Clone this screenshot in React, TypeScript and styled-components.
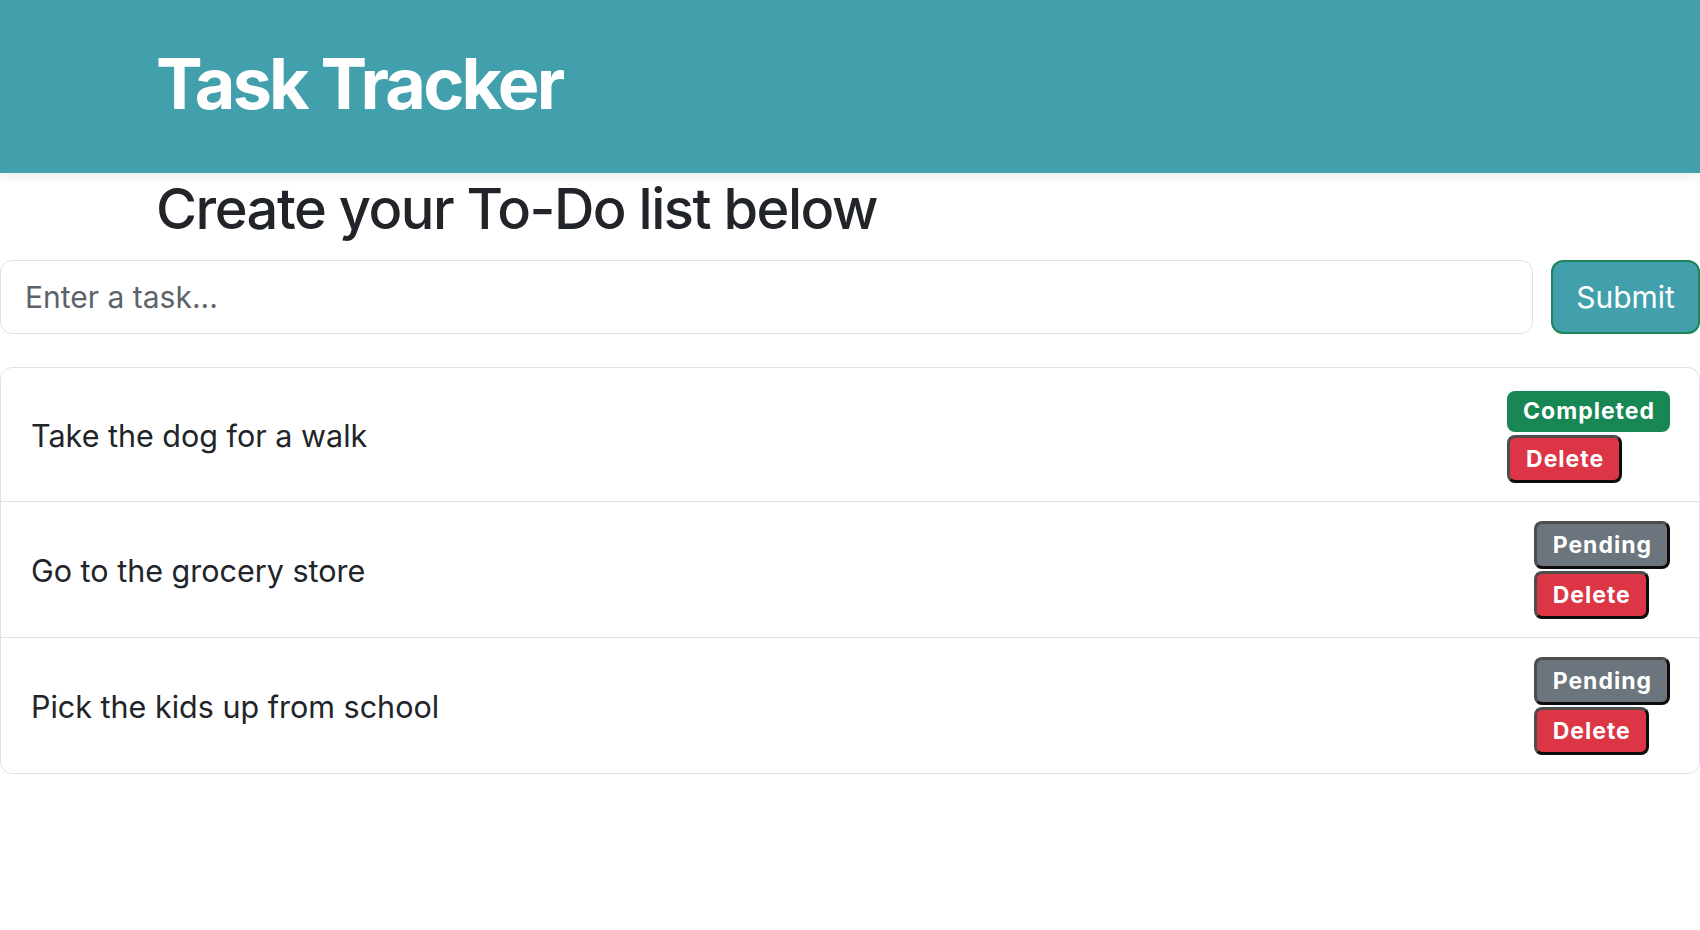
import React from "react";
import styled, { createGlobalStyle, css } from "styled-components";

const GlobalStyle = createGlobalStyle`
  html, body {
    margin: 0;
    padding: 0;
    background: #ffffff;
    font-family: Inter, "Noto Sans", "Liberation Sans", sans-serif;
    overflow-x: hidden;
  }
  * { box-sizing: border-box; }
`;

const TEAL = "#429fac";

const Header = styled.header`
  height: 173px;
  padding: 42px 0 0 156px;
  background: ${TEAL};
  box-shadow: 0 4px 10px rgba(0, 0, 0, 0.07);
  position: relative;
  z-index: 1;
`;

const Title = styled.h1`
  margin: 0;
  font-size: 70px;
  font-weight: 700;
  line-height: 1.2;
  letter-spacing: -2.8px;
  color: #ffffff;
`;

const Main = styled.main`
  display: flex;
  flex-direction: column;
`;

const Subtitle = styled.h2`
  margin: 3px 0 17px 156px;
  font-size: 56px;
  font-weight: 500;
  line-height: 1.2;
  letter-spacing: -1.5px;
  color: #212529;
`;

const Form = styled.form`
  display: flex;
  gap: 18px;
  height: 74px;
`;

const TaskInput = styled.input`
  flex: 1;
  min-width: 0;
  height: 100%;
  padding: 0 24px;
  border: 1px solid #dee2e6;
  border-radius: 12px;
  font-family: inherit;
  font-size: 30px;
  color: #212529;
  outline: none;
  &::placeholder {
    color: #5c636a;
  }
`;

const SubmitButton = styled.button`
  flex: 0 0 149px;
  height: 100%;
  padding: 0;
  background: ${TEAL};
  border: 2px solid #1d8558;
  border-radius: 12px;
  color: #ffffff;
  font-family: inherit;
  font-size: 30px;
  font-weight: 400;
`;

const List = styled.ul`
  margin: 33px 0 0;
  padding: 0;
  list-style: none;
  border: 1px solid #dee2e6;
  border-radius: 12px;
`;

const Row = styled.li`
  display: flex;
  align-items: center;
  justify-content: space-between;
  padding: 19px 29px 18px 30px;
  & + & {
    border-top: 1px solid #dee2e6;
  }
`;

const TaskText = styled.span`
  font-size: 30.5px;
  color: #212529;
`;

const Actions = styled.div`
  display: flex;
  flex-direction: column;
  align-items: flex-start;
  gap: 2px;
`;

const pillText = css`
  font-family: inherit;
  font-size: 23px;
  font-weight: 700;
  letter-spacing: 1px;
  color: #ffffff;
  line-height: 1;
  border-radius: 8px;
`;

const CompletedBadge = styled.span`
  ${pillText};
  display: inline-flex;
  align-items: center;
  height: 41px;
  margin: 4px 0 1px;
  padding: 0 15px 0 16px;
  background: #198754;
`;

const ActionButton = styled.button<{ $tone: "pending" | "delete" }>`
  ${pillText};
  height: 48px;
  padding: 0 15px 0 16px;
  border-style: solid;
  border-width: 3px;
  border-color: #4d4d4d #0d0d0d #0d0d0d #4d4d4d;
  background: ${(p) => (p.$tone === "pending" ? "#6c757d" : "#dc3545")};
`;

type Task = { text: string; done: boolean };

const tasks: Task[] = [
  { text: "Take the dog for a walk", done: true },
  { text: "Go to the grocery store", done: false },
  { text: "Pick the kids up from school", done: false },
];

export default function App() {
  return (
    <>
      <GlobalStyle />
      <Header>
        <Title>Task Tracker</Title>
      </Header>
      <Main>
        <Subtitle>Create your To-Do list below</Subtitle>
        <Form onSubmit={(e) => e.preventDefault()}>
          <TaskInput placeholder="Enter a task..." />
          <SubmitButton type="submit">Submit</SubmitButton>
        </Form>
        <List>
          {tasks.map((t) => (
            <Row key={t.text}>
              <TaskText>{t.text}</TaskText>
              <Actions>
                {t.done ? (
                  <CompletedBadge>Completed</CompletedBadge>
                ) : (
                  <ActionButton $tone="pending">Pending</ActionButton>
                )}
                <ActionButton $tone="delete">Delete</ActionButton>
              </Actions>
            </Row>
          ))}
        </List>
      </Main>
    </>
  );
}
